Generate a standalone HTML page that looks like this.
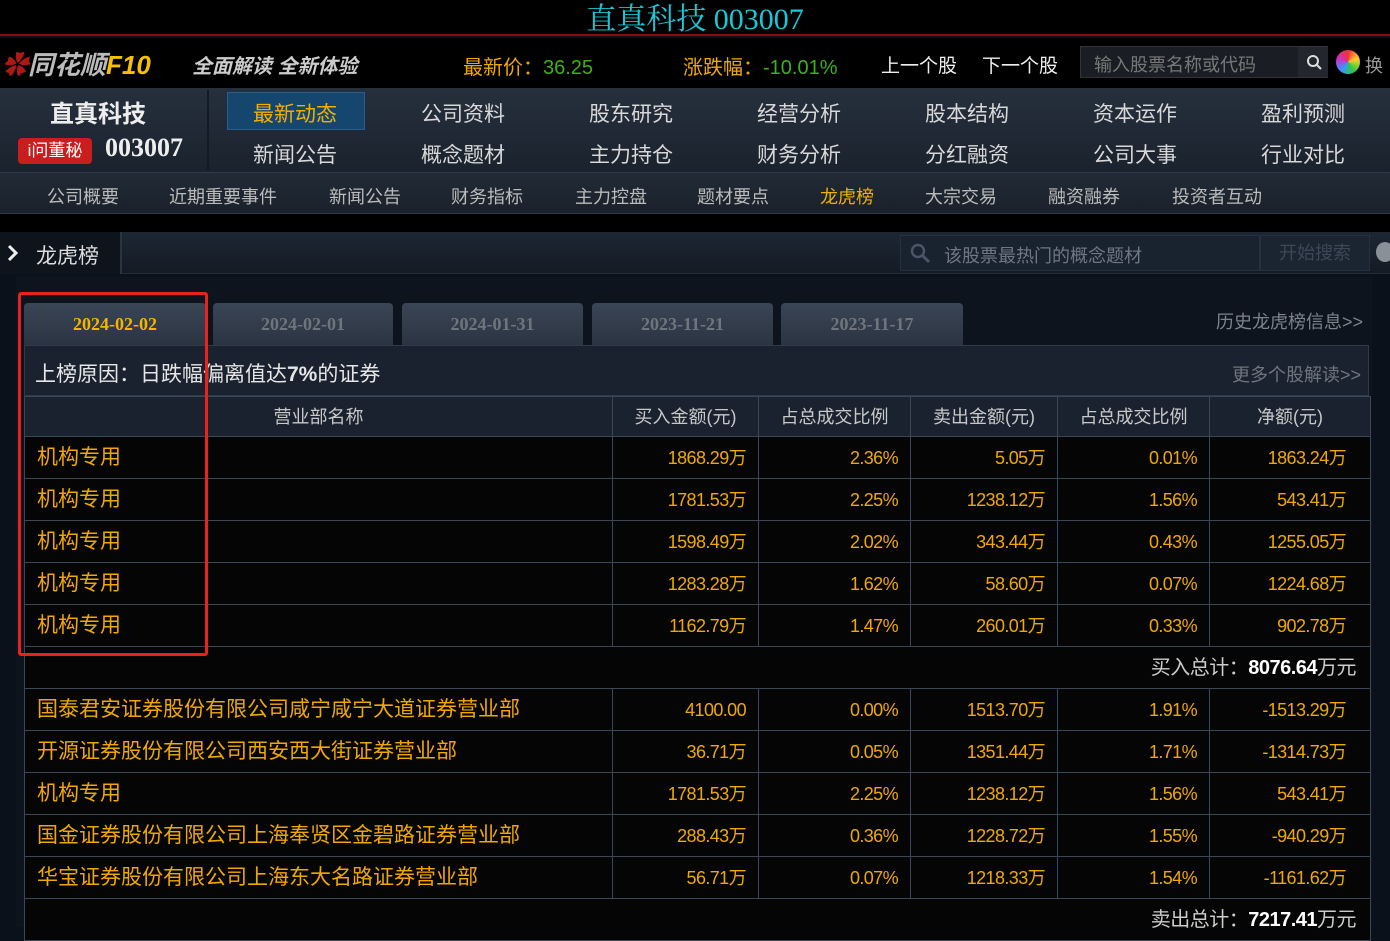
<!DOCTYPE html>
<html><head><meta charset="utf-8"><style>
*{margin:0;padding:0;box-sizing:border-box}
body{width:1390px;height:927px;overflow:hidden;background:#0b111b;font-family:"Liberation Sans","Noto Sans CJK SC",sans-serif;position:relative;color:#ccc}
.a{position:absolute;white-space:nowrap}
#top{left:0;top:0;width:1390px;height:36px;background:#000;border-bottom:2px solid #8a0c0c}
#bar{left:0;top:38px;width:1390px;height:50px;background:#000}
#nav{left:0;top:88px;width:1390px;height:84px;background:linear-gradient(#26303d,#1a222d)}
#sub{left:0;top:172px;width:1390px;height:42px;background:linear-gradient(#212a36,#1a212b);border-top:1px solid #2f3a48;border-bottom:1px solid #2f3a48}
#crumb{left:0;top:232px;width:1390px;height:42px;background:linear-gradient(#1d2633,#141b25);border-bottom:1px solid #222c38}
.nv{font-size:21px;color:#d8d8d8}
.sb{font-size:18px;color:#bbb}
.tab{height:42px;background:linear-gradient(#3a4555,#2b3442);border-radius:4px 4px 0 0;font-family:"Liberation Serif",serif;font-weight:bold;font-size:18px;color:#6f757d;text-align:center;line-height:42px}
table{position:absolute;left:24px;border-collapse:collapse;table-layout:fixed}
td{border:1px solid #3b4657;height:42px;font-size:18px;color:#f0a800;text-align:right;padding-right:12px;letter-spacing:-0.6px;background:#050505;line-height:20px}
td:last-child{padding-right:24px}
td.n{text-align:left;padding-left:12px;font-size:21px;letter-spacing:0}
tr.h td{background:#1a2230;color:#c8c8c8;text-align:center;padding:0;font-size:18px;height:40px;letter-spacing:0}
td.t{color:#ccc;font-size:20px;letter-spacing:-0.5px;padding-right:14px}
td.t b{color:#fff}
</style></head><body>
<div class="a" id="top"></div>
<div class="a" style="left:0;top:-6px;width:1390px;text-align:center;font-family:'Liberation Serif','Noto Serif CJK SC',serif;font-size:30px;color:#18c8d8">直真科技 003007</div>
<div class="a" id="bar"></div>
<div class="a" style="left:2px;top:45px;font-size:26px;font-style:italic;font-weight:bold;color:#bbb"><span style="color:#b01818">✿</span>同花顺<span style="color:#f5c000;font-family:'Liberation Sans'">F10</span></div>
<div class="a" style="left:192px;top:50px;font-size:20px;font-weight:bold;font-style:italic;color:#ccc">全面解读 全新体验</div>
<div class="a" style="left:463px;top:51px;font-size:20px;color:#f0a800">最新价：<span style="color:#3cb01c">36.25</span></div>
<div class="a" style="left:683px;top:51px;font-size:20px;color:#f0a800">涨跌幅：<span style="color:#3cb01c">-10.01%</span></div>
<div class="a" style="left:881px;top:51px;font-size:19px;color:#eee">上一个股</div>
<div class="a" style="left:982px;top:51px;font-size:19px;color:#eee">下一个股</div>
<div class="a" style="left:1080px;top:46px;width:248px;height:32px;background:#1a1e24;border:1px solid #333"></div>
<div class="a" style="left:1094px;top:51px;font-size:18px;color:#777">输入股票名称或代码</div>
<div class="a" style="left:1298px;top:47px;width:30px;height:30px;background:#23272d"></div>
<svg class="a" style="left:1305px;top:53px" width="18" height="18"><circle cx="8" cy="8" r="5" stroke="#ddd" stroke-width="2" fill="none"/><path d="M12 12l4 4" stroke="#ddd" stroke-width="2"/></svg>
<div class="a" style="left:1336px;top:50px;width:24px;height:24px;border-radius:50%;background:conic-gradient(#e33,#fc3,#3c3,#39f,#c3c,#e33)"></div>
<div class="a" style="left:1365px;top:52px;font-size:18px;color:#999">换</div>
<div class="a" id="nav"></div>
<div class="a" style="left:207px;top:90px;width:2px;height:80px;background:#141a22"></div>
<div class="a" style="left:50px;top:94px;font-size:24px;font-weight:bold;color:#eee">直真科技</div>
<div class="a" style="left:18px;top:138px;width:74px;height:26px;background:#c81e1e;border-radius:4px;color:#fff;font-size:17px;text-align:center;line-height:26px">i问董秘</div>
<div class="a" style="left:105px;top:133px;font-size:26px;font-weight:bold;color:#eee;font-family:'Liberation Serif',serif">003007</div>
<div class="a" style="left:227px;top:92px;width:138px;height:38px;background:#15466e;border:1px solid #2a5d88"></div>
<div class="a nv" style="left:253px;top:98px;color:#f0b000">最新动态</div>
<div class="a nv" style="left:253px;top:139px">新闻公告</div>
<div class="a nv" style="left:421px;top:98px">公司资料</div><div class="a nv" style="left:421px;top:139px">概念题材</div>
<div class="a nv" style="left:589px;top:98px">股东研究</div><div class="a nv" style="left:589px;top:139px">主力持仓</div>
<div class="a nv" style="left:757px;top:98px">经营分析</div><div class="a nv" style="left:757px;top:139px">财务分析</div>
<div class="a nv" style="left:925px;top:98px">股本结构</div><div class="a nv" style="left:925px;top:139px">分红融资</div>
<div class="a nv" style="left:1093px;top:98px">资本运作</div><div class="a nv" style="left:1093px;top:139px">公司大事</div>
<div class="a nv" style="left:1261px;top:98px">盈利预测</div><div class="a nv" style="left:1261px;top:139px">行业对比</div>
<div class="a" id="sub"></div>
<div class="a sb" style="left:47px;top:183px">公司概要</div>
<div class="a sb" style="left:169px;top:183px">近期重要事件</div>
<div class="a sb" style="left:329px;top:183px">新闻公告</div>
<div class="a sb" style="left:451px;top:183px">财务指标</div>
<div class="a sb" style="left:575px;top:183px">主力控盘</div>
<div class="a sb" style="left:697px;top:183px">题材要点</div>
<div class="a sb" style="left:820px;top:183px;color:#f0b000">龙虎榜</div>
<div class="a sb" style="left:925px;top:183px">大宗交易</div>
<div class="a sb" style="left:1048px;top:183px">融资融券</div>
<div class="a sb" style="left:1172px;top:183px">投资者互动</div>
<div class="a" style="left:0;top:214px;width:1390px;height:18px;background:#000"></div>
<div class="a" id="crumb"></div>
<div class="a" style="left:0;top:232px;width:122px;height:42px;background:#0e141c;border-right:2px solid #2a3340"></div>
<svg class="a" style="left:6px;top:244px" width="14" height="18"><path d="M3 2l7 7-7 7" stroke="#eee" stroke-width="3" fill="none"/></svg>
<div class="a" style="left:36px;top:240px;font-size:21px;color:#ddd">龙虎榜</div>
<div class="a" style="left:900px;top:235px;width:360px;height:36px;background:#19222f;border:1px solid #253040"></div>
<svg class="a" style="left:909px;top:242px" width="24" height="22"><circle cx="9" cy="9" r="6" stroke="#4a5566" stroke-width="2.5" fill="none"/><path d="M13 13l7 7" stroke="#4a5566" stroke-width="3"/></svg>
<div class="a" style="left:944px;top:242px;font-size:18px;color:#6f7782">该股票最热门的概念题材</div>
<div class="a" style="left:1260px;top:235px;width:110px;height:36px;background:#1b2431;border:1px solid #253040;color:#3e4755;font-size:18px;text-align:center;line-height:34px">开始搜索</div>
<div class="a" style="left:1376px;top:242px;width:18px;height:20px;border-radius:50%;background:#8a9098"></div>
<div class="a" style="left:16px;top:276px;width:1356px;height:651px;background:#0e141e"></div>
<div class="a tab" style="left:24px;top:303px;width:182px;color:#f5b400">2024-02-02</div>
<div class="a tab" style="left:213px;top:303px;width:180px">2024-02-01</div>
<div class="a tab" style="left:402px;top:303px;width:181px">2024-01-31</div>
<div class="a tab" style="left:592px;top:303px;width:181px">2023-11-21</div>
<div class="a tab" style="left:781px;top:303px;width:182px">2023-11-17</div>
<div class="a" style="left:1216px;top:308px;font-size:18px;color:#7d838b">历史龙虎榜信息&gt;&gt;</div>
<div class="a" style="left:24px;top:345px;width:1345px;height:51px;background:#1a2230;border:1px solid #2f3a4a"></div>
<div class="a" style="left:35px;top:358px;font-size:21px;color:#e6e6e6">上榜原因：日跌幅偏离值达<b>7%</b>的证券</div>
<div class="a" style="left:1232px;top:361px;font-size:18px;color:#6f757d">更多个股解读&gt;&gt;</div>
<table style="top:396px;width:1346px">
<colgroup><col style="width:588px"><col style="width:146px"><col style="width:152px"><col style="width:147px"><col style="width:152px"><col style="width:161px"></colgroup>
<tr class="h"><td>营业部名称</td><td>买入金额(元)</td><td>占总成交比例</td><td>卖出金额(元)</td><td>占总成交比例</td><td>净额(元)</td></tr>
<tr><td class="n">机构专用</td><td>1868.29万</td><td>2.36%</td><td>5.05万</td><td>0.01%</td><td>1863.24万</td></tr>
<tr><td class="n">机构专用</td><td>1781.53万</td><td>2.25%</td><td>1238.12万</td><td>1.56%</td><td>543.41万</td></tr>
<tr><td class="n">机构专用</td><td>1598.49万</td><td>2.02%</td><td>343.44万</td><td>0.43%</td><td>1255.05万</td></tr>
<tr><td class="n">机构专用</td><td>1283.28万</td><td>1.62%</td><td>58.60万</td><td>0.07%</td><td>1224.68万</td></tr>
<tr><td class="n">机构专用</td><td>1162.79万</td><td>1.47%</td><td>260.01万</td><td>0.33%</td><td>902.78万</td></tr>
<tr><td colspan="6" class="t">买入总计：<b>8076.64</b>万元</td></tr>
<tr><td class="n">国泰君安证券股份有限公司咸宁咸宁大道证券营业部</td><td>4100.00</td><td>0.00%</td><td>1513.70万</td><td>1.91%</td><td>-1513.29万</td></tr>
<tr><td class="n">开源证券股份有限公司西安西大街证券营业部</td><td>36.71万</td><td>0.05%</td><td>1351.44万</td><td>1.71%</td><td>-1314.73万</td></tr>
<tr><td class="n">机构专用</td><td>1781.53万</td><td>2.25%</td><td>1238.12万</td><td>1.56%</td><td>543.41万</td></tr>
<tr><td class="n">国金证券股份有限公司上海奉贤区金碧路证券营业部</td><td>288.43万</td><td>0.36%</td><td>1228.72万</td><td>1.55%</td><td>-940.29万</td></tr>
<tr><td class="n">华宝证券股份有限公司上海东大名路证券营业部</td><td>56.71万</td><td>0.07%</td><td>1218.33万</td><td>1.54%</td><td>-1161.62万</td></tr>
<tr><td colspan="6" class="t">卖出总计：<b>7217.41</b>万元</td></tr>
</table>
<div class="a" style="left:18px;top:292px;width:190px;height:364px;border:3px solid #e8231e;border-radius:3px"></div>
</body></html>
